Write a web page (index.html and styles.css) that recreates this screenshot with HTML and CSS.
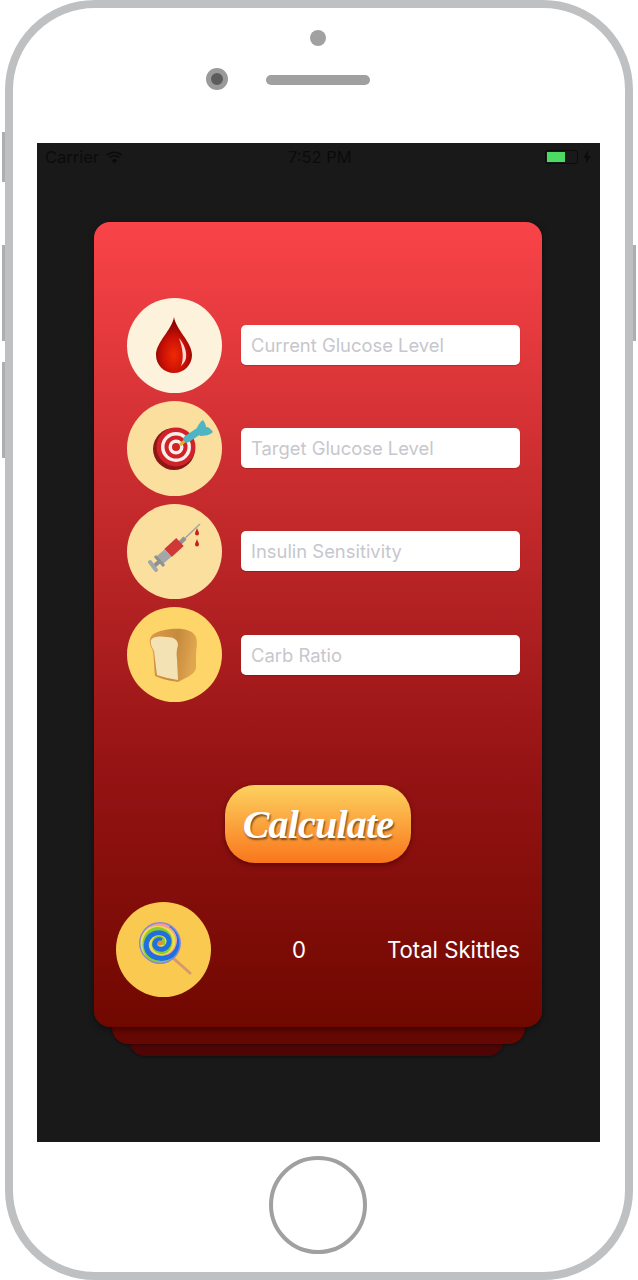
FILE: index.html
```html
<!DOCTYPE html>
<html lang="en">
<head>
    <meta charset="UTF-8">
    <meta name="viewport" content="width=device-width, initial-scale=1.0">
    <title>Skittles Calculator</title>
    <link rel="stylesheet" href="styles.css">
</head>
<body>
    <div class="phone">
        <div class="side-button side-mute"></div>
        <div class="side-button side-up"></div>
        <div class="side-button side-down"></div>
        <div class="side-button side-power"></div>

        <div class="bezel-top">
            <div class="sensor"></div>
            <div class="camera-row">
                <div class="camera"></div>
                <div class="speaker"></div>
            </div>
        </div>

        <div class="screen">
            <div class="status-bar">
                <div class="status-left">
                    <span>Carrier</span>
                    <svg class="wifi" width="17" height="13" viewBox="0 0 17 13">
                        <path d="M8.5 12.5 L5.8 9.2 A4.2 4.2 0 0 1 11.2 9.2 Z" fill="#0b0b0b"/>
                        <path d="M3.7 6.7 A7.4 7.4 0 0 1 13.3 6.7" fill="none" stroke="#0b0b0b" stroke-width="1.7"/>
                        <path d="M1.2 4 A11 11 0 0 1 15.8 4" fill="none" stroke="#0b0b0b" stroke-width="1.7"/>
                    </svg>
                </div>
                <span class="status-time">7:52 PM</span>
                <div class="status-right">
                    <div class="battery"><div class="battery-fill"></div></div>
                    <svg width="8" height="14" viewBox="0 0 8 14"><path d="M5.2 0 L0.5 8 H3.4 L2.8 14 L7.5 6 H4.6 Z" fill="#0b0b0b"/></svg>
                </div>
            </div>

            <div class="card-stack">
                <div class="card-back card-back-2"></div>
                <div class="card-back card-back-1"></div>
                <div class="card">
                    <div class="fields">
                        <div class="field-row">
                            <div class="icon-circle circle-drop">
                                <svg width="95" height="95" viewBox="0 0 95 95">
                                    <defs>
                                        <radialGradient id="dropFill" cx="0.5" cy="0.68" r="0.55">
                                            <stop offset="0" stop-color="#f02a05"/>
                                            <stop offset="0.6" stop-color="#c81005"/>
                                            <stop offset="1" stop-color="#8f0404"/>
                                        </radialGradient>
                                    </defs>
                                    <path d="M47 19 C49 32 65 44 65 57 C65 67 57 75 47 75 C37 75 29 67 29 57 C29 44 45 32 47 19 Z" fill="url(#dropFill)"/>
                                    <path d="M52 40 C57 46 60 53 59 60 C58 64 56 66 54 68 C57 61 56 51 52 40 Z" fill="#fbd9d0"/>
                                </svg>
                            </div>
                            <input class="field-input" type="text" placeholder="Current Glucose Level">
                        </div>
                        <div class="field-row">
                            <div class="icon-circle circle-target">
                                <svg width="95" height="95" viewBox="0 0 95 95">
                                    <circle cx="47" cy="48" r="21" fill="#8e1616"/>
                                    <circle cx="49" cy="46" r="19.5" fill="#cf2329"/>
                                    <circle cx="49" cy="46" r="15" fill="#f8efe8"/>
                                    <circle cx="49" cy="46" r="11.5" fill="#cf2329"/>
                                    <circle cx="49" cy="46" r="7.5" fill="#f8efe8"/>
                                    <circle cx="49" cy="46" r="4" fill="#cf2329"/>
                                    <path d="M53 44 L60 38" stroke="#e6b02e" stroke-width="3"/>
                                    <path d="M60 38 L72 30" stroke="#4fb4c4" stroke-width="7" stroke-linecap="round"/>
                                    <path d="M69 30 C70 25 73 21 76 19 C78 22 79 24 79 26 C82 26 84 28 86 31 C83 34 78 35 73 35 Z" fill="#4fb4c4"/>
                                </svg>
                            </div>
                            <input class="field-input" type="text" placeholder="Target Glucose Level">
                        </div>
                        <div class="field-row">
                            <div class="icon-circle circle-syringe">
                                <svg width="95" height="95" viewBox="0 0 95 95">
                                    <path d="M55 37 L73 20" stroke="#9ea3a6" stroke-width="1.4"/>
                                    <path d="M51 41 L58 34" stroke="#8f9496" stroke-width="4.5"/>
                                    <path d="M41 49 L53 38" stroke="#cf3836" stroke-width="11"/>
                                    <path d="M33 56 L41 49" stroke="#a3a7a9" stroke-width="10"/>
                                    <path d="M28 52 L37 62" stroke="#8b9093" stroke-width="3"/>
                                    <path d="M33 57 L26 63" stroke="#8b9093" stroke-width="4"/>
                                    <path d="M23 58 L29 66" stroke="#a3a7a9" stroke-width="4" stroke-linecap="round"/>
                                    <path d="M70 24 C71 27 72 28 72 29.5 A2 2 0 0 1 68 29.5 C68 28 69 27 70 24 Z" fill="#c8201f"/>
                                    <path d="M70 35 C71 38 72 39 72 40.5 A2 2 0 0 1 68 40.5 C68 39 69 38 70 35 Z" fill="#c8201f"/>
                                </svg>
                            </div>
                            <input class="field-input" type="text" placeholder="Insulin Sensitivity">
                        </div>
                        <div class="field-row">
                            <div class="icon-circle circle-bread">
                                <svg width="95" height="95" viewBox="0 0 95 95">
                                    <defs>
                                        <linearGradient id="crustFill" x1="0" y1="0" x2="1" y2="0.2">
                                            <stop offset="0" stop-color="#dc9a4c"/>
                                            <stop offset="0.6" stop-color="#c68a3e"/>
                                            <stop offset="1" stop-color="#e0a650"/>
                                        </linearGradient>
                                    </defs>
                                    <path d="M23 32 C24 26 34 23 44 22 C56 21 66 23 69 30 C71 36 69 42 69 48 L69 60 C69 67 60 70 51 75 C44 74 34 72 28 69 C27 60 27 52 26 44 C24 40 22 37 23 32 Z" fill="url(#crustFill)"/>
                                    <path d="M24 33 C26 29 34 29 40 30 C47 30 51 33 51 38 C50 42 49 46 50 52 L51 73 C44 72 36 70 30 68 C29 60 28 52 27 44 C25 40 23 37 24 33 Z" fill="#f3e2b4"/>
                                </svg>
                            </div>
                            <input class="field-input field-input-last" type="text" placeholder="Carb Ratio">
                        </div>
                    </div>

                    <button class="calc-button">Calculate</button>

                    <div class="total-row">
                        <div class="icon-circle circle-candy">
                            <svg width="95" height="95" viewBox="0 0 95 95" fill="none">
                                <defs>
                                    <clipPath id="candyClip"><circle cx="44" cy="41" r="19.5"/></clipPath>
                                    <path id="swirl" d="M44 20 A18 18 0 0 1 44 56 A12.5 12.5 0 0 1 44 31 A8 8 0 0 1 44 47 A4.5 4.5 0 0 1 44 38"/>
                                </defs>
                                <path d="M57 56 L74 71" stroke="#d39a6b" stroke-width="3" stroke-linecap="round"/>
                                <circle cx="44" cy="41" r="21" fill="#8a86d6"/>
                                <g clip-path="url(#candyClip)">
                                    <circle cx="44" cy="41" r="19.5" fill="#a5e3ea"/>
                                    <use href="#swirl" stroke="#f39aa0" stroke-width="4" transform="rotate(290 44 41)"/>
                                    <use href="#swirl" stroke="#eede4a" stroke-width="3.5" transform="rotate(210 44 41)"/>
                                    <use href="#swirl" stroke="#8ccb2a" stroke-width="4" transform="rotate(125 44 41)"/>
                                    <use href="#swirl" stroke="#1f6fe0" stroke-width="5" transform="rotate(30 44 41)"/>
                                </g>
                                <circle cx="44" cy="41" r="2.5" fill="#f08a32"/>
                            </svg>
                        </div>
                        <span class="total-count">0</span>
                        <span class="total-label">Total Skittles</span>
                    </div>
                </div>
            </div>
        </div>

        <div class="bezel-bottom">
            <div class="home-button"></div>
        </div>
    </div>
</body>
</html>
```

FILE: styles.css
```css
body {
    margin: 0;
    background: #fff;
    font-family: Inter, "Liberation Sans", sans-serif;
    height: 1280px;
    overflow: hidden;
}

.phone {
    position: relative;
    box-sizing: border-box;
    width: 628px;
    height: 1280px;
    margin-left: 5px;
    border: 8px solid #bfc0c2;
    border-radius: 90px;
    background: #fff;
    display: flex;
    flex-direction: column;
}

.side-button {
    position: absolute;
    width: 3px;
    background: #aeaeae;
    left: -11px;
}

.side-mute { top: 124px; height: 50px; }
.side-up { top: 237px; height: 96px; }
.side-down { top: 354px; height: 96px; }
.side-power { top: 237px; height: 96px; left: auto; right: -11px; }

.bezel-top {
    height: 135px;
    flex-shrink: 0;
    display: flex;
    flex-direction: column;
    align-items: center;
}

.sensor {
    width: 16px;
    height: 16px;
    margin-top: 22px;
    margin-right: 2px;
    border-radius: 50%;
    background: #a1a1a1;
}

.camera-row {
    width: 164px;
    margin-top: 22px;
    margin-left: -63px;
    display: flex;
    align-items: center;
    justify-content: space-between;
}

.camera {
    box-sizing: border-box;
    width: 22px;
    height: 22px;
    border: 5px solid #9a9a9a;
    border-radius: 50%;
    background: #5c5c5c;
}

.speaker {
    width: 104px;
    height: 10px;
    margin-top: 2px;
    border-radius: 5px;
    background: #a0a0a0;
}

.screen {
    width: 563px;
    height: 999px;
    margin-left: 24px;
    flex-shrink: 0;
    background: #191919;
}

.status-bar {
    height: 28px;
    padding: 0 9px 0 8px;
    display: flex;
    align-items: center;
    justify-content: space-between;
    color: #0b0b0b;
    font-size: 16.5px;
    position: relative;
}

.status-left {
    display: flex;
    align-items: center;
    gap: 7px;
}

.status-time {
    position: absolute;
    left: 251px;
    top: 4px;
}

.status-right {
    display: flex;
    align-items: center;
    gap: 5px;
}

.battery {
    box-sizing: border-box;
    width: 33px;
    height: 14px;
    padding: 1px;
    border: 1px solid #0b0b0b;
    border-radius: 3px;
}

.battery-fill {
    width: 18px;
    height: 100%;
    background: #4cd964;
}

.card-stack {
    position: relative;
    width: 448px;
    margin: 51px 0 0 57px;
}

.card-back {
    position: absolute;
    border-radius: 16px;
    background: #4d0605;
    box-shadow: 0 1px 3px rgba(0, 0, 0, 0.4);
}

.card-back-1 {
    left: 18px;
    right: 17px;
    bottom: -17px;
    height: 100px;
    background: #650703;
}

.card-back-2 {
    left: 35px;
    right: 38px;
    bottom: -29px;
    height: 100px;
}

.card {
    position: relative;
    box-sizing: border-box;
    height: 805px;
    padding-top: 76px;
    border-radius: 16px;
    background: linear-gradient(180deg, #f94449 0%, #c72b2d 34%, #951314 68%, #700800 100%);
    box-shadow: 0 2px 6px rgba(0, 0, 0, 0.45);
    display: flex;
    flex-direction: column;
    align-items: center;
}

.fields {
    width: 100%;
    box-sizing: border-box;
    padding: 0 22px 0 33px;
    display: flex;
    flex-direction: column;
    gap: 8px;
}

.field-row {
    display: flex;
    align-items: center;
    gap: 19px;
}

.icon-circle {
    width: 95px;
    height: 95px;
    flex-shrink: 0;
    border-radius: 50%;
}

.icon-circle svg {
    display: block;
    filter: blur(0.4px);
}

.circle-drop { background: #fdf2dc; }
.circle-target { background: #fbdf9e; }
.circle-syringe { background: #fbdf9f; }
.circle-bread { background: #fdd568; }
.circle-candy { background: #f9c950; }

.field-input {
    flex-grow: 1;
    min-width: 0;
    box-sizing: border-box;
    height: 40px;
    margin-bottom: 2px;
    padding: 0 10px;
    border: none;
    border-radius: 5px;
    background: #fff;
    box-shadow: 0 1px 1px rgba(80, 0, 0, 0.25);
    font-family: Inter, "Liberation Sans", sans-serif;
    font-size: 18.4px;
    outline: none;
}

.field-input-last {
    margin-bottom: 0;
}

.field-input::placeholder {
    color: #c7c7cd;
}

.calc-button {
    width: 186px;
    height: 78px;
    margin-top: 83px;
    padding: 0;
    border: none;
    border-radius: 30px;
    background: linear-gradient(180deg, #fdd25f, #f9761c);
    box-shadow: 0 2px 5px rgba(60, 0, 0, 0.6);
    color: #fff;
    font-family: "Liberation Serif", serif;
    font-style: italic;
    font-weight: bold;
    font-size: 40px;
    letter-spacing: -0.8px;
    text-shadow: 1px 2px 2px #7a4a1c;
}

.total-row {
    width: 100%;
    box-sizing: border-box;
    margin-top: 39px;
    padding: 0 22px;
    display: flex;
    align-items: center;
    justify-content: space-between;
    color: #fff;
    font-size: 22.2px;
}

.bezel-bottom {
    flex-grow: 1;
    display: flex;
    justify-content: center;
    padding-top: 14px;
}

.home-button {
    box-sizing: border-box;
    width: 98px;
    height: 98px;
    margin-right: 2px;
    border: 4px solid #a0a0a0;
    border-radius: 50%;
}
```
